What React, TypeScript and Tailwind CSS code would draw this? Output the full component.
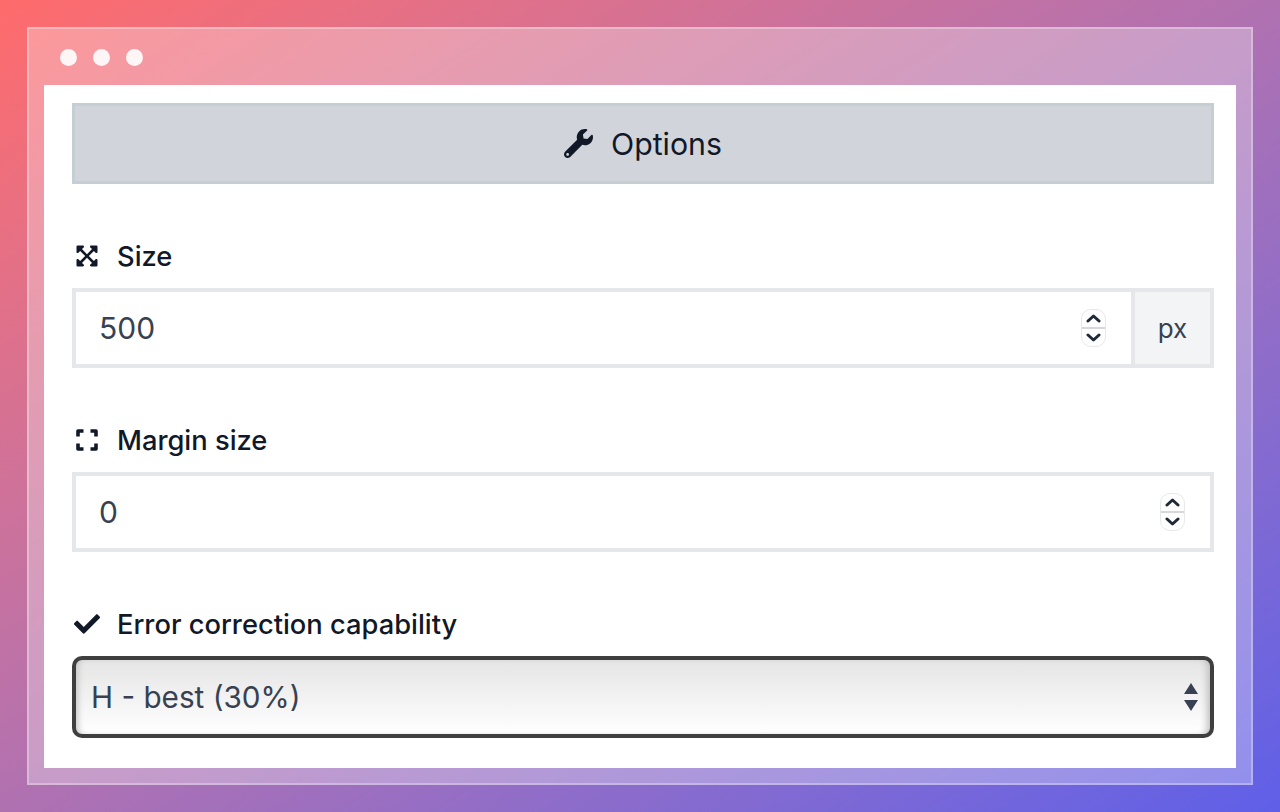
const fieldLabel = "flex items-center h-8 text-[27.3px] leading-8 font-medium text-[#111827]";

const Spinner = () => (
  <div className="flex flex-col w-[25px] h-[38px] rounded-[10px] border border-[#e8e8e8] bg-white shrink-0 overflow-hidden">
    <div className="flex flex-1 items-center justify-center border-b-2 border-[#d8d8d8]">
      <svg width="15" height="9" viewBox="0 0 15 9" fill="none" stroke="#1f2937" strokeWidth="3" strokeLinecap="round" strokeLinejoin="round">
        <path d="M2 7l5.5-5 5.5 5" />
      </svg>
    </div>
    <div className="flex flex-1 items-center justify-center">
      <svg width="15" height="9" viewBox="0 0 15 9" fill="none" stroke="#1f2937" strokeWidth="3" strokeLinecap="round" strokeLinejoin="round">
        <path d="M2 2l5.5 5 5.5-5" />
      </svg>
    </div>
  </div>
);

const WrenchIcon = () => (
  <svg width="29" height="29" viewBox="0 0 512 512" fill="#111827">
    <path d="M507.73 109.1c-2.24-9.03-13.54-12.09-20.12-5.51l-74.36 74.36-67.88-11.31-11.31-67.88 74.36-74.36c6.62-6.62 3.43-17.9-5.66-20.16-47.38-11.74-99.55.91-136.58 37.93-39.64 39.64-50.55 97.1-34.05 147.2L18.74 402.76c-24.99 24.99-24.99 65.51 0 90.5 24.99 24.99 65.51 24.99 90.5 0l213.21-213.21c50.12 16.71 107.47 5.68 147.37-34.22 37.07-37.07 49.7-89.32 37.91-136.73zM64 472c-13.25 0-24-10.75-24-24 0-13.26 10.75-24 24-24s24 10.74 24 24c0 13.25-10.75 24-24 24z" />
  </svg>
);

const ExpandIcon = () => (
  <svg width="24" height="24" viewBox="0 0 448 512" fill="#111827">
    <path d="M448 344v112a23.94 23.94 0 0 1-24 24H312c-21.39 0-32.09-25.9-17-41l36.2-36.2L224 295.6 116.77 402.9 153 439c15.09 15.1 4.39 41-17 41H24a23.94 23.94 0 0 1-24-24V344c0-21.4 25.89-32.1 41-17l36.19 36.2L184.46 256 77.18 148.7 41 185c-15.1 15.1-41 4.4-41-17V56a23.94 23.94 0 0 1 24-24h112c21.39 0 32.09 25.9 17 41l-36.2 36.2L224 216.4l107.23-107.3L295 73c-15.09-15.1-4.39-41 17-41h112a23.94 23.94 0 0 1 24 24v112c0 21.4-25.89 32.1-41 17l-36.19-36.2L263.54 256l107.28 107.3L407 327.1c15.1-15.2 41-4.5 41 16.9z" />
  </svg>
);

const CornersIcon = () => (
  <svg width="24" height="24" viewBox="0 0 24 24" fill="none" stroke="#111827" strokeWidth="3.6" strokeLinejoin="round">
    <path d="M3 8.5V3h5.5M15.5 3H21v5.5M21 15.5V21h-5.5M8.5 21H3v-5.5" />
  </svg>
);

const CheckIcon = () => (
  <svg width="26" height="26" viewBox="0 0 512 512" fill="#111827">
    <path d="M173.898 439.404l-166.4-166.4c-9.997-9.997-9.997-26.206 0-36.204l36.203-36.204c9.997-9.998 26.207-9.998 36.204 0L192 312.69 432.095 72.596c9.997-9.997 26.207-9.997 36.204 0l36.203 36.204c9.997 9.997 9.997 26.206 0 36.204l-294.4 294.401c-9.998 9.997-26.207 9.997-36.204-.001z" />
  </svg>
);

export default function App() {
  return (
    <div className="w-[1280px] h-[812px] p-[27px] overflow-hidden bg-linear-to-br from-[#ff6b6b] to-[#5f5fe8] font-['Inter',sans-serif]">
      <div className="flex flex-col h-full bg-white/30 border-2 border-white/30 px-[15px] pb-[15px]">
        <div className="flex items-center gap-4 h-[56px] pl-4 shrink-0">
          <span className="w-[17px] h-[17px] rounded-full bg-white/90" />
          <span className="w-[17px] h-[17px] rounded-full bg-white/90" />
          <span className="w-[17px] h-[17px] rounded-full bg-white/90" />
        </div>
        <div className="flex flex-col flex-1 bg-white pl-7 pr-[22px] pt-[18px]">
          <div className="flex items-center justify-center gap-[18px] h-[81px] bg-[#d1d5db] border-[3px] border-[#c5ced3] text-[30.3px] text-[#111827]">
            <WrenchIcon />
            <span className="pt-[2px]">Options</span>
          </div>

          <div className={`${fieldLabel} mt-14`}>
            <span className="flex w-[45px] pl-[3px]"><ExpandIcon /></span>
            <span className="pt-[2px]">Size</span>
          </div>
          <div className="flex h-20 mt-4 border-4 border-[#e5e7eb]">
            <div className="flex flex-1 items-center pl-[23px] pr-[25px] text-[30px] text-[#374151]">
              <span className="flex-1">500</span>
              <Spinner />
            </div>
            <div className="flex items-center justify-center w-[79px] bg-[#f3f4f6] border-l-4 border-[#e5e7eb] text-[26px] text-[#374151]">px</div>
          </div>

          <div className={`${fieldLabel} mt-14`}>
            <span className="flex w-[45px] pl-[3px]"><CornersIcon /></span>
            <span className="pt-[2px]">Margin size</span>
          </div>
          <div className="flex h-20 mt-4 border-4 border-[#e5e7eb]">
            <div className="flex flex-1 items-center pl-[23px] pr-[25px] text-[30px] text-[#374151]">
              <span className="flex-1">0</span>
              <Spinner />
            </div>
          </div>

          <div className={`${fieldLabel} mt-14`}>
            <span className="flex w-[45px] pl-[2px]"><CheckIcon /></span>
            <span className="pt-[2px]">Error correction capability</span>
          </div>
          <div className="relative flex items-center h-[82px] mt-4 pl-[15px] border-4 border-[#3f3f3f] rounded-[10px] bg-linear-to-b from-[#e5e5e5] to-white shadow-[inset_5px_0_6px_-3px_#c4c4c4,inset_-7px_0_7px_-4px_#c0c0c0] text-[29.7px] text-[#374151]">
            H - best (30%)
            <svg className="absolute right-[3px] top-[20px]" width="32" height="34" viewBox="0 0 32 34" fill="#374151">
              <path d="M16 3l7 11H9zM16 31l-7-11h14z" />
            </svg>
          </div>
        </div>
      </div>
    </div>
  );
}
